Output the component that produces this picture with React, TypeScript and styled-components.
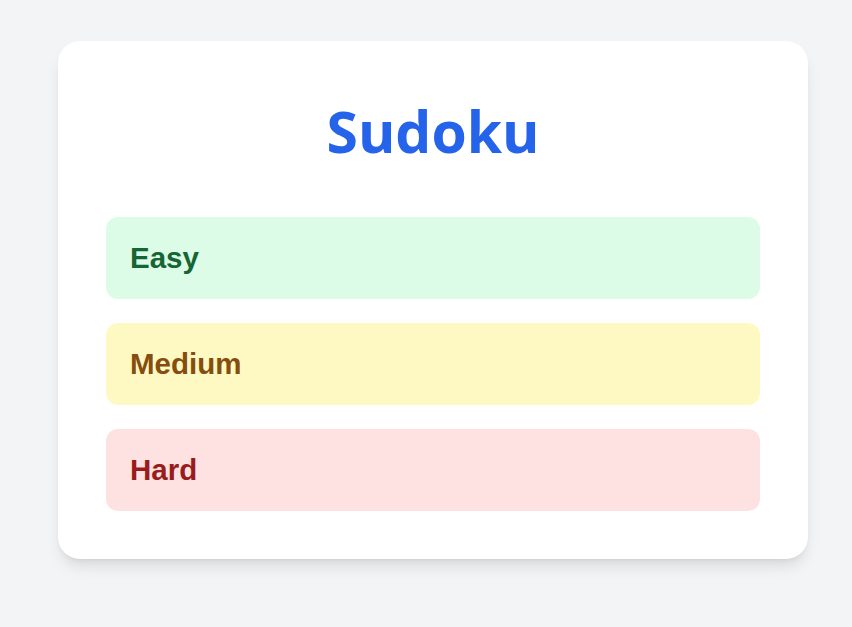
import React from "react";
import styled, { createGlobalStyle } from "styled-components";

const Global = createGlobalStyle`
  html, body { margin: 0; padding: 0; background: #f3f4f6; }
  body { font-family: "Liberation Sans", Arial, sans-serif; }
`;

const Page = styled.div`
  padding: 41px 44px 40px 58px;
`;

const Card = styled.div`
  width: 750px;
  box-sizing: border-box;
  background: #ffffff;
  border-radius: 22px;
  padding: 48px;
  box-shadow: 0 10px 15px -3px rgba(0, 0, 0, 0.1), 0 4px 6px -4px rgba(0, 0, 0, 0.1);
`;

const Title = styled.h1`
  margin: 0 0 44px;
  height: 84px;
  display: flex;
  align-items: center;
  justify-content: center;
  font-family: "Open Sans", "Noto Sans", sans-serif;
  font-weight: 700;
  font-size: 57px;
  color: #2563eb;
`;

const List = styled.div`
  display: flex;
  flex-direction: column;
  gap: 24px;
`;

const Level = styled.button<{ $bg: string; $fg: string }>`
  height: 82px;
  border: none;
  border-radius: 12px;
  padding: 0 24px;
  text-align: left;
  background: ${(p) => p.$bg};
  color: ${(p) => p.$fg};
  font-family: "Liberation Sans", Arial, sans-serif;
  font-weight: 700;
  font-size: 29.5px;
  cursor: pointer;
`;

const levels = [
  { label: "Easy", bg: "#dcfce7", fg: "#166534" },
  { label: "Medium", bg: "#fef9c3", fg: "#854d0e" },
  { label: "Hard", bg: "#fee2e2", fg: "#991b1b" },
];

export default function App() {
  return (
    <>
      <Global />
      <Page>
        <Card>
          <Title>Sudoku</Title>
          <List>
            {levels.map((l) => (
              <Level key={l.label} $bg={l.bg} $fg={l.fg}>
                {l.label}
              </Level>
            ))}
          </List>
        </Card>
      </Page>
    </>
  );
}
